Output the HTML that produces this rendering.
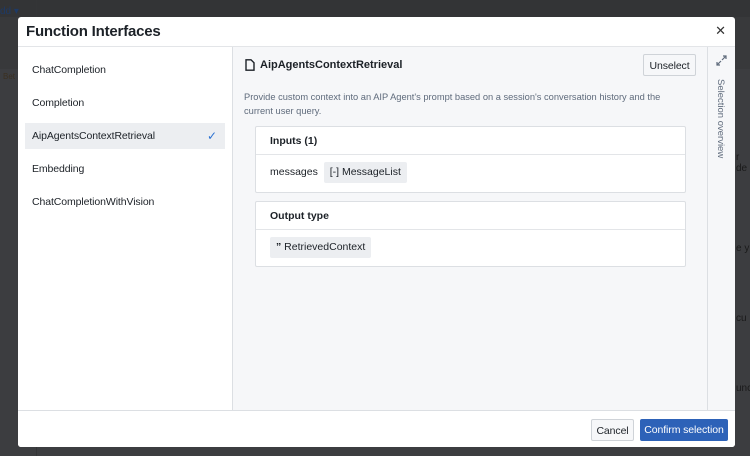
<!DOCTYPE html>
<html style="background:#3c3d40"><head><style>
*{box-sizing:border-box;margin:0;padding:0}
body{width:750px;height:456px;background:#3c3d40;font-family:"Liberation Sans",sans-serif;position:relative;overflow:hidden;color:#1c2127}
.bg{position:absolute;color:#1a1a1a;font-size:10px}
.modal{position:absolute;left:18px;top:17px;width:717px;height:430px;background:#fff;border-radius:3px;overflow:hidden}
.hdr{height:30px;border-bottom:1px solid #e3e5e8;display:flex;align-items:center;padding-left:8px;font-size:15px;font-weight:bold;letter-spacing:-0.2px}
.close{position:absolute;right:9px;top:6px;font-size:13px;color:#333}
.left{position:absolute;left:0;top:30px;width:215px;height:363px;border-right:1px solid #dcdfe3}
.item{position:absolute;left:7px;width:200px;height:26px;font-size:10.5px;line-height:27px;padding-left:7px;letter-spacing:-0.1px}
.item.sel{background:#eceef1}
.right{position:absolute;left:215px;top:30px;width:474px;height:363px;background:#f6f7f9}
.side{position:absolute;left:689px;top:30px;width:28px;height:363px;background:#f6f7f9;border-left:1px solid #dcdfe3}
.foot{position:absolute;left:0;top:393px;width:717px;height:37px;border-top:1px solid #dcdfe3;background:#fff}
.btn{position:absolute;font-size:10.5px;height:22px;line-height:22px;text-align:center;border-radius:2px;letter-spacing:-0.1px}
.card{position:absolute;left:22px;width:431px;background:#fff;border:1px solid #dcdfe3;border-radius:2px}
.card .h{height:28px;border-bottom:1px solid #e3e5e8;font-size:10.5px;font-weight:bold;line-height:28px;padding-left:14px}
.tag{display:inline-block;background:#eceef1;border-radius:2px;padding:0 6px;height:21px;line-height:21px;font-size:10.5px}
</style></head><body>
<div class="bg" style="left:0;top:0;width:750px;height:17px;background:#333436"></div>
<div class="bg" style="left:0;top:17px;width:750px;height:52px;background:#38393b"></div>
<div class="bg" style="left:36px;top:0;width:1px;height:456px;background:#343537"></div>
<div class="bg" style="left:0;top:6px;color:#1e3a66;font-size:10px">dd ▾</div>
<div class="bg" style="left:3px;top:72px;color:#3b3020;font-size:8px">Bet</div>
<div class="bg" style="left:736px;top:152px">r de</div>
<div class="bg" style="left:736px;top:243px">e y</div>
<div class="bg" style="left:736px;top:313px">cu</div>
<div class="bg" style="left:736px;top:383px">unc</div>
<div class="modal">
 <div class="hdr">Function Interfaces</div>
 <div class="close">✕</div>
 <div class="left">
  <div class="item" style="top:10px">ChatCompletion</div>
  <div class="item" style="top:43px">Completion</div>
  <div class="item sel" style="top:76px">AipAgentsContextRetrieval<span style="position:absolute;right:8px;color:#2d72d2;font-size:12px">✓</span></div>
  <div class="item" style="top:109px">Embedding</div>
  <div class="item" style="top:142px">ChatCompletionWithVision</div>
 </div>
 <div class="right">
  <svg style="position:absolute;left:12px;top:12px" width="10" height="12" viewBox="0 0 10 12"><path d="M1 .8h5l3 3v7.4H1z" fill="none" stroke="#1c2127" stroke-width="1.4"/></svg>
  <div style="position:absolute;left:27px;top:12px;font-size:11px;font-weight:bold">AipAgentsContextRetrieval</div>
  <div class="btn" style="left:410px;top:7px;width:53px;border:1px solid #cfd3d8;background:#f6f7f9">Unselect</div>
  <div style="position:absolute;left:11px;top:44px;width:432px;font-size:9.3px;line-height:13.5px;color:#5f6b7c">Provide custom context into an AIP Agent's prompt based on a session's conversation history and the current user query.</div>
  <div class="card" style="top:79px;height:67px"><div class="h">Inputs (1)</div>
   <div style="padding:7px 14px;font-size:10.5px">messages&nbsp;&nbsp;<span class="tag">[-] MessageList</span></div></div>
  <div class="card" style="top:154px;height:66px"><div class="h">Output type</div>
   <div style="padding:7px 14px;font-size:10.5px"><span class="tag"><b>”</b> RetrievedContext</span></div></div>
 </div>
 <div class="side">
  <svg style="position:absolute;left:8px;top:8px" width="11" height="11" viewBox="0 0 11 11"><path d="M6 5L10 1M7 1h3v3M5 6L1 10M1 7v3h3" fill="none" stroke="#5f6b7c" stroke-width="1.2"/></svg>
  <div style="position:absolute;left:7px;top:32px;writing-mode:vertical-rl;font-size:9.5px;color:#5f6b7c">Selection overview</div>
 </div>
 <div class="foot">
  <div class="btn" style="left:573px;top:8px;width:43px;border:1px solid #cfd3d8;background:#f6f7f9">Cancel</div>
  <div class="btn" style="left:622px;top:8px;width:88px;background:#2d62b8;color:#fff">Confirm selection</div>
 </div>
</div>
</body></html>
